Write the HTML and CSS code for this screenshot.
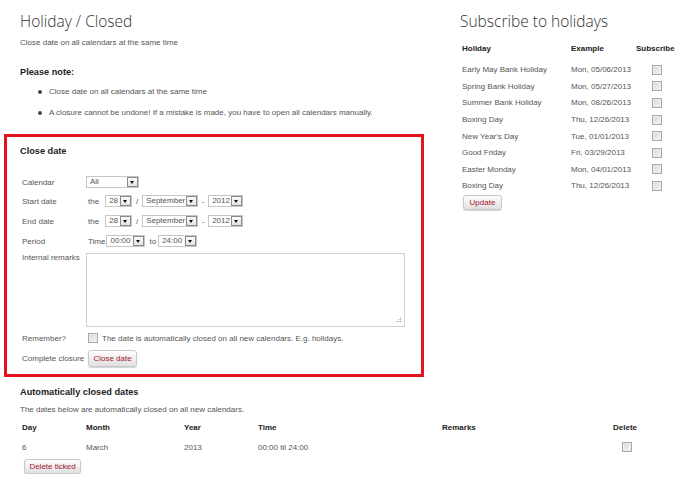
FILE: index.html
```html
<!DOCTYPE html>
<html>
<head>
<meta charset="utf-8">
<title>Holiday / Closed</title>
<link rel="stylesheet" href="styles.css">
</head>
<body>
<div class="top">
  <div class="left">
    <h1 class="title">Holiday / Closed</h1>
    <p class="sub">Close date on all calendars at the same time</p>
    <h3 class="note-h">Please note:</h3>
    <ul class="notes">
      <li>Close date on all calendars at the same time</li>
      <li>A closure cannot be undone! If a mistake is made, you have to open all calendars manually.</li>
    </ul>

    <section class="closebox">
      <h3 class="box-h">Close date</h3>
      <div class="form">
        <div class="row r-cal">
          <span class="lbl">Calendar</span>
          <div class="ctl">
            <span class="sel w-all"><span class="val">All</span><span class="arr"></span></span>
          </div>
        </div>
        <div class="row">
          <span class="lbl">Start date</span>
          <div class="ctl">
            <span class="word w-the">the</span>
            <span class="sel w-day"><span class="val">28</span><span class="arr"></span></span>
            <span class="sep">/</span>
            <span class="sel w-mon"><span class="val">September</span><span class="arr"></span></span>
            <span class="sep">-</span>
            <span class="sel w-yr"><span class="val">2012</span><span class="arr"></span></span>
          </div>
        </div>
        <div class="row">
          <span class="lbl">End date</span>
          <div class="ctl">
            <span class="word w-the">the</span>
            <span class="sel w-day"><span class="val">28</span><span class="arr"></span></span>
            <span class="sep">/</span>
            <span class="sel w-mon"><span class="val">September</span><span class="arr"></span></span>
            <span class="sep">-</span>
            <span class="sel w-yr"><span class="val">2012</span><span class="arr"></span></span>
          </div>
        </div>
        <div class="row">
          <span class="lbl">Period</span>
          <div class="ctl">
            <span class="word w-time">Time</span>
            <span class="sel w-hr"><span class="val">00:00</span><span class="arr"></span></span>
            <span class="word w-to">to</span>
            <span class="sel w-hr"><span class="val">24:00</span><span class="arr"></span></span>
          </div>
        </div>
        <div class="row r-remarks">
          <span class="lbl">Internal remarks</span>
          <div class="ta">
            <svg class="grip" width="7" height="7" viewBox="0 0 7 7"><g fill="#b5b5b5"><rect x="5" y="0" width="1.2" height="1.2"/><rect x="3" y="2" width="1.2" height="1.2"/><rect x="5" y="2" width="1.2" height="1.2"/><rect x="1" y="4" width="1.2" height="1.2"/><rect x="3" y="4" width="1.2" height="1.2"/><rect x="5" y="4" width="1.2" height="1.2"/></g></svg>
          </div>
        </div>
        <div class="row r-rem">
          <span class="lbl">Remember?</span>
          <div class="ctl">
            <span class="cb"></span>
            <span class="cb-text">The date is automatically closed on all new calendars. E.g. holidays.</span>
          </div>
        </div>
        <div class="row r-btn">
          <span class="lbl">Complete closure</span>
          <div class="ctl">
            <button class="btn b-close">Close date</button>
          </div>
        </div>
      </div>
    </section>
  </div>

  <div class="right">
    <h1 class="title">Subscribe to holidays</h1>
    <div class="hol-table">
      <div class="hrow head"><span>Holiday</span><span>Example</span><span>Subscribe</span></div>
      <div class="hrow"><span>Early May Bank Holiday</span><span>Mon, 05/06/2013</span><span class="cbc"><span class="cb"></span></span></div>
      <div class="hrow"><span>Spring Bank Holiday</span><span>Mon, 05/27/2013</span><span class="cbc"><span class="cb"></span></span></div>
      <div class="hrow"><span>Summer Bank Holiday</span><span>Mon, 08/26/2013</span><span class="cbc"><span class="cb"></span></span></div>
      <div class="hrow"><span>Boxing Day</span><span>Thu, 12/26/2013</span><span class="cbc"><span class="cb"></span></span></div>
      <div class="hrow"><span>New Year's Day</span><span>Tue, 01/01/2013</span><span class="cbc"><span class="cb"></span></span></div>
      <div class="hrow"><span>Good Friday</span><span>Fri, 03/29/2013</span><span class="cbc"><span class="cb"></span></span></div>
      <div class="hrow"><span>Easter Monday</span><span>Mon, 04/01/2013</span><span class="cbc"><span class="cb"></span></span></div>
      <div class="hrow"><span>Boxing Day</span><span>Thu, 12/26/2013</span><span class="cbc"><span class="cb"></span></span></div>
    </div>
    <button class="btn b-update">Update</button>
  </div>
</div>

<section class="auto">
  <h3 class="auto-h">Automatically closed dates</h3>
  <p class="auto-sub">The dates below are automatically closed on all new calendars.</p>
  <div class="atable">
    <div class="arow head"><span>Day</span><span>Month</span><span>Year</span><span>Time</span><span>Remarks</span><span>Delete</span></div>
    <div class="arow"><span>6</span><span>March</span><span>2013</span><span>00:00 til 24:00</span><span></span><span class="delc"><span class="cb"></span></span></div>
  </div>
  <button class="btn b-del">Delete ticked</button>
</section>
</body>
</html>
```

FILE: styles.css
```css
* { box-sizing: border-box; }

body {
  margin: 0;
  width: 695px;
  background: #fff;
  font-family: "Liberation Sans", Arial, sans-serif;
  font-size: 8px;
  color: #555;
  white-space: nowrap;
}

h1, h3, p, ul { margin: 0; padding: 0; }

.top { display: flex; }

.left { width: 424px; padding-left: 4px; flex: none; }

.right { margin-left: 36px; flex: 1; }

.title {
  margin-top: 10px;
  font-family: "Open Sans", "Liberation Sans", sans-serif;
  font-weight: 300;
  font-size: 15.5px;
  line-height: 22px;
  color: #333;
}

.left > .title, .left > .sub, .left > .note-h, .left > .notes { margin-left: 16px; }

.sub { margin-top: 5px; line-height: 12px; }

.note-h {
  margin-top: 17px;
  font-size: 9.2px;
  line-height: 12px;
  font-weight: bold;
  color: #222;
}

.notes { list-style: none; padding-left: 29px; margin-top: 8px; }
.notes li { position: relative; line-height: 12px; margin-bottom: 9px; }
.notes li::before {
  content: "";
  position: absolute;
  left: -11px;
  top: 4px;
  width: 4px;
  height: 4px;
  border-radius: 50%;
  background: #444;
}
.notes li:last-child { margin-bottom: 0; }

.closebox {
  margin-top: 15px;
  border: 3px solid #e5121d;
  padding: 8px 0 7px 13px;
  height: 243px;
}

.box-h {
  font-size: 9.2px;
  line-height: 12px;
  font-weight: bold;
  color: #222;
}

.form { margin-top: 16px; padding-left: 2px; }

.row { display: flex; align-items: center; height: 20px; }
.row.r-cal { height: 18px; }
.lbl { width: 64px; flex: none; }
.ctl { display: flex; align-items: center; }

.word { flex: none; }
.w-the { margin-left: 2px; margin-right: 6px; }
.w-time { margin-left: 2px; margin-right: 1px; }
.w-to { margin: 0 2px 0 4px; }
.sep { width: 10px; text-align: center; }

.sel {
  display: inline-flex;
  align-items: center;
  height: 12px;
  border: 1px solid #c6c6c6;
  background: #fff;
  color: #555;
  flex: none;
}
.sel .val { flex: 1; padding-left: 3px; line-height: 10px; }
.arr {
  width: 11px;
  height: 10px;
  border: 1px solid #8a8a8a;
  background: linear-gradient(#fbfbfb, #e4e4e4);
  position: relative;
  flex: none;
}
.arr::after {
  content: "";
  position: absolute;
  left: 2px;
  top: 3px;
  border-left: 2.5px solid transparent;
  border-right: 2.5px solid transparent;
  border-top: 3px solid #111;
}
.w-all { width: 53px; }
.w-day { width: 27px; }
.w-mon { width: 56px; }
.w-yr { width: 35px; }
.w-hr { width: 39px; }

.r-remarks { height: auto; align-items: flex-start; margin-top: 2px; }
.r-remarks .lbl { line-height: 12px; margin-top: -1px; }
.ta {
  position: relative;
  width: 319px;
  height: 74px;
  border: 1px solid #cfcfcf;
  background: #fff;
}
.grip { position: absolute; right: 2px; bottom: 2px; }

.r-rem { height: 16px; margin-top: 3px; }
.r-btn { height: 18px; margin-top: 3px; }

.cb {
  display: inline-block;
  width: 10px;
  height: 10px;
  border: 1px solid #a8a8a8;
  background: linear-gradient(135deg, #d6d6d6, #f7f7f7);
  box-shadow: inset 0 0 0 1px #ececec;
  flex: none;
}
.r-rem .cb { margin-left: 2px; }
.cb-text { margin-left: 4px; color: #555; }

.btn {
  font-family: "Liberation Sans", Arial, sans-serif;
  font-size: 8px;
  color: #a0182a;
  border: 1px solid #c9c9c9;
  border-radius: 3px;
  background: linear-gradient(#fefefe, #e0e0e0);
  box-shadow: 0 1px 1px rgba(0,0,0,0.18);
  padding: 0;
  line-height: 13px;
}
.b-close { margin-left: 2px; width: 49px; height: 17px; }

.hol-table { margin-top: 10px; margin-left: 2px; }
.hrow { display: grid; grid-template-columns: 109px 65px 45px; height: 16.6px; align-items: center; }
.hrow.head { height: 12px; margin-bottom: 7.5px; font-weight: bold; color: #222; }
.cbc { padding-left: 16px; display: flex; }

.b-update { margin-left: 3px; margin-top: 1px; width: 39px; height: 15px; }

.auto { padding-left: 20px; margin-top: 9px; }
.auto-h { font-size: 9.2px; line-height: 12px; font-weight: bold; color: #222; }
.auto-sub { margin-top: 6px; line-height: 12px; }
.atable { margin-top: 5px; padding-left: 2px; }
.arow { display: grid; grid-template-columns: 64px 98px 74px 184px 171px 50px; height: 12px; align-items: center; }
.arow.head { font-weight: bold; color: #222; margin-bottom: 8px; }
.delc { padding-left: 9px; display: flex; }
.b-del { margin-left: 4px; margin-top: 6px; width: 57px; height: 15px; }
```
